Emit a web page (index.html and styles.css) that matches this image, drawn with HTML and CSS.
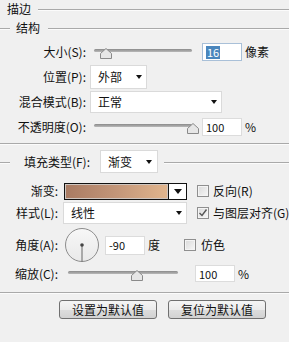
FILE: index.html
```html
<!DOCTYPE html>
<html lang="zh-CN">
<head>
    <meta charset="UTF-8">
    <meta name="viewport" content="width=device-width, initial-scale=1.0">
    <title>描边</title>
    <link rel="stylesheet" href="styles.css">
</head>
<body>
    <div class="panel">
        <div class="legend legend-main">
            <span class="legend-text">描边</span>
            <span class="legend-line"></span>
        </div>
        <div class="legend legend-sub">
            <span class="legend-lead"></span>
            <span class="legend-text">结构</span>
            <span class="legend-line"></span>
        </div>

        <div class="row row-size">
            <span class="label label-a">大小(S):</span>
            <div class="slider slider-a">
                <span class="track"></span>
                <svg class="thumb" style="left: 6px" width="12" height="11" viewBox="0 0 12 11">
                    <polygon points="0.5,10.5 0.5,5.5 6,0.5 11.5,5.5 11.5,10.5" fill="#e6e6e6" stroke="#8a8a8a"/>
                </svg>
            </div>
            <span class="field field-a field-focus"><span class="selected">16</span></span>
            <span class="unit">像素</span>
        </div>

        <div class="row row-place">
            <span class="label label-a">位置(P):</span>
            <div class="select select-place"><span>外部</span><span class="arrow"></span></div>
        </div>

        <div class="row row-blend">
            <span class="label label-a">混合模式(B):</span>
            <div class="select select-blend"><span>正常</span><span class="arrow"></span></div>
        </div>

        <div class="row row-opacity">
            <span class="label label-a">不透明度(O):</span>
            <div class="slider slider-a">
                <span class="track"></span>
                <svg class="thumb" style="left: 93px" width="12" height="11" viewBox="0 0 12 11">
                    <polygon points="0.5,10.5 0.5,5.5 6,0.5 11.5,5.5 11.5,10.5" fill="#e6e6e6" stroke="#8a8a8a"/>
                </svg>
            </div>
            <span class="field field-a">100</span>
            <span class="unit">%</span>
        </div>

        <div class="divider divider-top"></div>

        <div class="row row-fill">
            <span class="legend-lead"></span>
            <span class="label label-fill">填充类型(F):</span>
            <div class="select select-fill"><span>渐变</span><span class="arrow"></span></div>
            <span class="legend-line"></span>
        </div>

        <div class="row row-grad">
            <span class="label label-b">渐变:</span>
            <div class="gradient">
                <span class="gradient-fill"></span>
                <span class="gradient-btn"><span class="arrow arrow-big"></span></span>
            </div>
            <span class="check"></span>
            <span class="check-text">反向(R)</span>
        </div>

        <div class="row row-style">
            <span class="label label-b">样式(L):</span>
            <div class="select select-style"><span>线性</span><span class="arrow"></span></div>
            <span class="check">
                <svg width="10" height="10" viewBox="0 0 10 10">
                    <path d="M1.5 5 L4 7.5 L8.5 1.5" fill="none" stroke="#555" stroke-width="1.4"/>
                </svg>
            </span>
            <span class="check-text">与图层对齐(G)</span>
        </div>

        <div class="row row-angle">
            <span class="label label-b">角度(A):</span>
            <svg class="dial" width="34" height="34" viewBox="0 0 34 34">
                <defs>
                    <linearGradient id="dialBg" x1="0" y1="0" x2="0" y2="1">
                        <stop offset="0" stop-color="#f7f7f7"/>
                        <stop offset="1" stop-color="#e9e9e9"/>
                    </linearGradient>
                </defs>
                <circle cx="17" cy="17" r="16.5" fill="url(#dialBg)" stroke="#8c8c8c"/>
                <line x1="17" y1="17" x2="17" y2="33.5" stroke="#666" stroke-width="1"/>
                <circle cx="17" cy="17" r="1.8" fill="#444"/>
            </svg>
            <span class="field field-angle">-90</span>
            <span class="unit unit-deg">度</span>
            <span class="check check-dither"></span>
            <span class="check-text">仿色</span>
        </div>

        <div class="row row-scale">
            <span class="label label-b">缩放(C):</span>
            <div class="slider slider-b">
                <span class="track"></span>
                <svg class="thumb" style="left: 63px" width="12" height="11" viewBox="0 0 12 11">
                    <polygon points="0.5,10.5 0.5,5.5 6,0.5 11.5,5.5 11.5,10.5" fill="#e6e6e6" stroke="#8a8a8a"/>
                </svg>
            </div>
            <span class="field field-scale">100</span>
            <span class="unit">%</span>
        </div>

        <div class="divider divider-bottom"></div>

        <div class="buttons">
            <button type="button" class="btn">设置为默认值</button>
            <button type="button" class="btn">复位为默认值</button>
        </div>
    </div>
</body>
</html>
```

FILE: styles.css
```css
body {
    margin: 0;
    background-color: #f0f0f0;
    font-family: "Noto Sans CJK SC", "Noto Sans", sans-serif;
    font-size: 12px;
    color: #111;
}

.panel {
    width: 289px;
    height: 342px;
    overflow: hidden;
}

/* group headers */

.legend {
    display: flex;
    align-items: center;
}

.legend-main {
    height: 18px;
    padding-left: 7px;
}

.legend-sub {
    height: 20px;
}

.legend-text {
    line-height: 14px;
}

.legend-line {
    flex: 1;
    height: 0;
    margin-top: 2px;
    border-top: 1px solid #a9a9a9;
    border-bottom: 1px solid #fbfbfb;
}

.legend-main .legend-line {
    margin-left: 7px;
}

.legend-sub .legend-line {
    margin-left: 8px;
}

.legend-lead {
    flex: none;
    width: 10px;
    height: 0;
    margin-top: 2px;
    margin-right: 6px;
    border-top: 1px solid #a9a9a9;
    border-bottom: 1px solid #fbfbfb;
}

.divider {
    height: 0;
    border-top: 1px solid #a9a9a9;
    border-bottom: 1px solid #fbfbfb;
}

.divider-top {
    margin-top: 5px;
}

.divider-bottom {
    margin-top: 9px;
}

/* rows */

.row {
    display: flex;
    align-items: center;
}

.row-size { height: 20px; margin-top: 4px; }
.row-place { height: 26px; margin-top: 2px; }
.row-blend { height: 24px; }
.row-opacity { height: 22px; margin-top: 2px; }
.row-fill { height: 25px; margin-top: 4px; }
.row-grad { height: 18px; margin-top: 8px; }
.row-style { height: 22px; margin-top: 2px; }
.row-angle { height: 34px; margin-top: 4px; }
.row-scale { height: 19px; margin-top: 2px; }

.label {
    flex: none;
    text-align: right;
    white-space: nowrap;
    line-height: 14px;
}

.label-a { width: 86px; }
.label-b { width: 58px; }

.label-fill {
    width: 74px;
}

.unit {
    margin-left: 3px;
    line-height: 14px;
}

/* sliders */

.slider {
    position: relative;
    flex: none;
    height: 12px;
}

.slider-a {
    width: 98px;
    margin-left: 8px;
}

.slider-b {
    width: 110px;
    margin-left: 10px;
}

.track {
    display: block;
    margin-top: 3px;
    height: 3px;
    border-radius: 2px;
    background: linear-gradient(#8a8a8a, #b9b9b9);
}

.thumb {
    position: absolute;
    top: 2px;
}

/* text fields */

.field {
    flex: none;
    box-sizing: border-box;
    display: flex;
    align-items: center;
    height: 18px;
    padding-left: 3px;
    background-color: #fff;
    border: 1px solid #dcdcdc;
    font-size: 11px;
}

.field-a {
    width: 40px;
    margin-left: 10px;
}

.field-focus {
    border-color: #a9c0d8;
}

.selected {
    background-color: #4a86bd;
    color: #fff;
    padding: 0 1px;
    line-height: 13px;
}

.field-angle {
    width: 40px;
    height: 19px;
    margin-left: 6px;
}

.unit-deg {
    margin-left: 3px;
}

.field-scale {
    width: 40px;
    height: 17px;
    margin-left: 17px;
}

/* dropdowns */

.select {
    flex: none;
    box-sizing: border-box;
    display: flex;
    align-items: center;
    justify-content: space-between;
    padding: 0 4px 0 7px;
    background-color: #fff;
    border: 1px solid #dadada;
    line-height: 14px;
}

.select-place {
    width: 57px;
    height: 24px;
    margin-left: 4px;
}

.select-blend {
    width: 132px;
    height: 22px;
    margin-left: 4px;
}

.select-fill {
    width: 58px;
    height: 23px;
    margin-left: 10px;
    padding-right: 5px;
}

.select-style {
    width: 124px;
    height: 22px;
    margin-left: 5px;
}

.row-fill .legend-line {
    margin-left: 6px;
}

.arrow {
    width: 0;
    height: 0;
    border-left: 3.5px solid transparent;
    border-right: 3.5px solid transparent;
    border-top: 4px solid #111;
}

.arrow-big {
    border-left-width: 4px;
    border-right-width: 4px;
    border-top-width: 5px;
}

/* gradient picker */

.gradient {
    flex: none;
    display: flex;
    box-sizing: border-box;
    width: 123px;
    height: 17px;
    margin-left: 6px;
    border: 1px solid #111;
}

.gradient-fill {
    flex: 1;
    background: linear-gradient(to right, #a97b63, #c39679 50%, #e1b58d);
    border: 1px solid #cfc6c0;
}

.gradient-btn {
    width: 17px;
    display: flex;
    align-items: center;
    justify-content: center;
    background-color: #fff;
    border-left: 1px solid #111;
}

/* checkboxes */

.check {
    flex: none;
    box-sizing: border-box;
    display: flex;
    align-items: center;
    justify-content: center;
    width: 12px;
    height: 12px;
    margin-left: 10px;
    border: 1px solid #8f8f8f;
    background: linear-gradient(135deg, #d9d9d9, #f8f8f8);
    box-shadow: inset 0 0 0 1px #f4f4f4;
}

.check-dither {
    margin-left: 24px;
}

.check-text {
    margin-left: 4px;
    line-height: 14px;
    white-space: nowrap;
}

.row-angle .check-text {
    margin-left: 5px;
}

.dial {
    flex: none;
    margin-left: 7px;
}

/* buttons */

.buttons {
    display: flex;
    gap: 11px;
    margin-top: 6px;
    padding-left: 59px;
}

.btn {
    box-sizing: border-box;
    width: 98px;
    height: 19px;
    padding: 0;
    border: 1px solid #707070;
    border-radius: 3px;
    background: linear-gradient(#f5f5f5, #ebebeb 50%, #dddddd 51%, #d2d2d2);
    font-family: "Noto Sans CJK SC", sans-serif;
    font-size: 12px;
    line-height: 16px;
    color: #111;
}
```
